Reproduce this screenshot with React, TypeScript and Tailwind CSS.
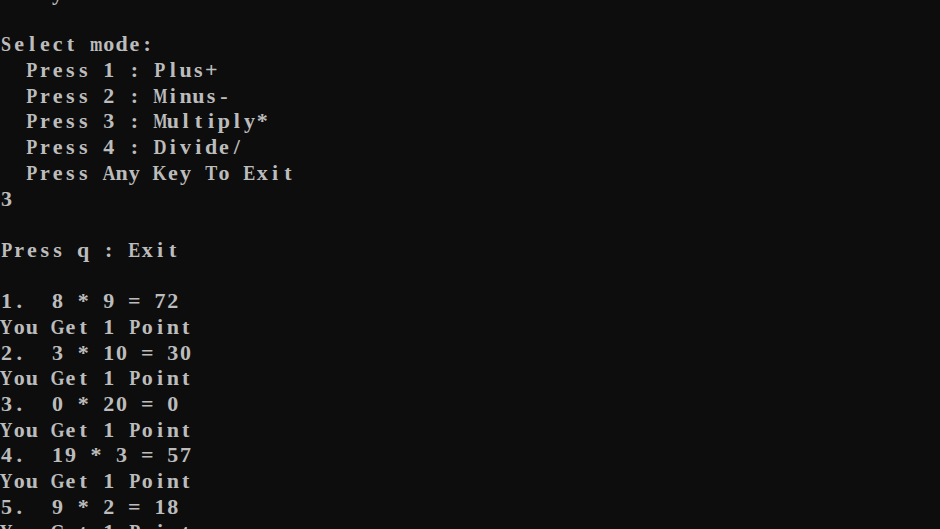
const lines = [
  "Today is 2018/1/1",
  "",
  "Select mode:",
  "  Press 1 : Plus+",
  "  Press 2 : Minus-",
  "  Press 3 : Multiply*",
  "  Press 4 : Divide/",
  "  Press Any Key To Exit",
  "3",
  "",
  "Press q : Exit",
  "",
  "1.  8 * 9 = 72",
  "You Get 1 Point",
  "2.  3 * 10 = 30",
  "You Get 1 Point",
  "3.  0 * 20 = 0",
  "You Get 1 Point",
  "4.  19 * 3 = 57",
  "You Get 1 Point",
  "5.  9 * 2 = 18",
  "You Get 1 Point",
];

const wide = "mMwW";

// squeeze glyphs wider than the console cell
function Glyph({ c }: { c: string }) {
  if (wide.includes(c)) {
    return <span className="inline-block [transform:scaleX(0.68)]">{c}</span>;
  }
  if (c >= "A" && c <= "Z") {
    return <span className="inline-block [transform:scaleX(0.82)]">{c}</span>;
  }
  return <>{c}</>;
}

// console cell grid: every char gets a fixed-width cell
function ConsoleLine({ text }: { text: string }) {
  return (
    <div className="h-[25.7px] flex">
      {text.split("").map((c, i) => (
        <span key={i} className="flex w-[12.8px] shrink-0 justify-center">
          <Glyph c={c} />
        </span>
      ))}
    </div>
  );
}

export default function App() {
  return (
    <div className="w-[940px] h-[529px] overflow-hidden bg-[#0d0d0d]">
      <div className="-mt-[20px] font-['Liberation_Serif',serif] font-bold text-[22px] leading-[25.7px] text-[#bcbcbc] whitespace-pre">
        {lines.map((l, i) => (
          <ConsoleLine key={i} text={l} />
        ))}
      </div>
    </div>
  );
}
